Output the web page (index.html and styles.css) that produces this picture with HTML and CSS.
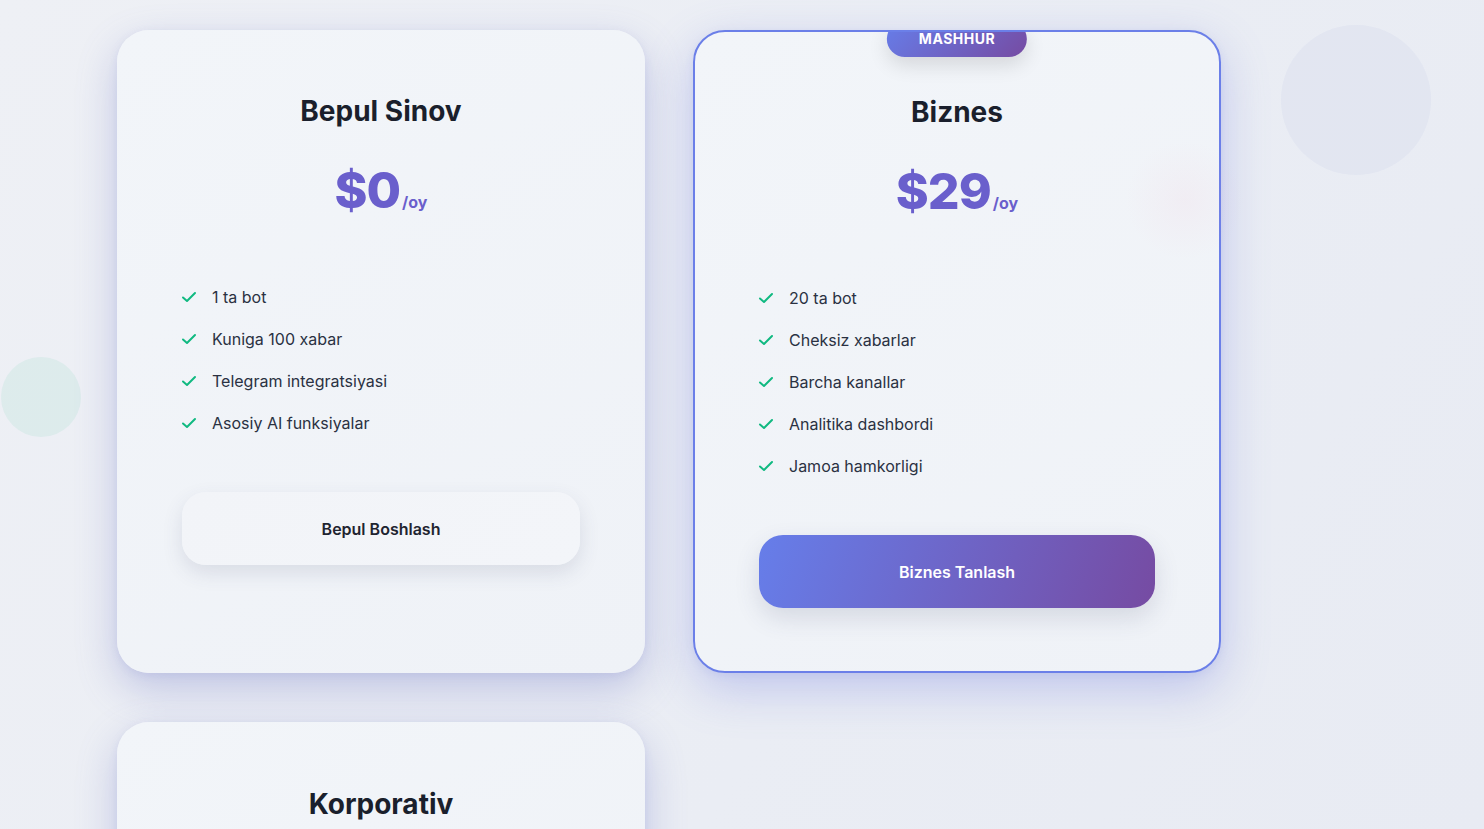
FILE: index.html
```html
<!DOCTYPE html>
<html lang="uz">
<head>
<meta charset="utf-8">
<title>Narxlar</title>
<link rel="stylesheet" href="styles.css">
</head>
<body>
<div class="blob blob-teal"></div>
<div class="blob blob-blue"></div>
<div class="blob blob-pink"></div>
<main class="pricing">
  <section class="card">
    <h3 class="plan">Bepul Sinov</h3>
    <div class="price"><span class="amount">$0</span><span class="per">/oy</span></div>
    <ul class="features">
      <li><svg class="check" viewBox="0 0 16 16"><polyline points="2,8.5 6,12 14,4"/></svg>1 ta bot</li>
      <li><svg class="check" viewBox="0 0 16 16"><polyline points="2,8.5 6,12 14,4"/></svg>Kuniga 100 xabar</li>
      <li><svg class="check" viewBox="0 0 16 16"><polyline points="2,8.5 6,12 14,4"/></svg>Telegram integratsiyasi</li>
      <li><svg class="check" viewBox="0 0 16 16"><polyline points="2,8.5 6,12 14,4"/></svg>Asosiy AI funksiyalar</li>
    </ul>
    <button class="btn btn-light">Bepul Boshlash</button>
  </section>
  <section class="card featured">
    <span class="badge">MASHHUR</span>
    <h3 class="plan">Biznes</h3>
    <div class="price"><span class="amount">$29</span><span class="per">/oy</span></div>
    <ul class="features">
      <li><svg class="check" viewBox="0 0 16 16"><polyline points="2,8.5 6,12 14,4"/></svg>20 ta bot</li>
      <li><svg class="check" viewBox="0 0 16 16"><polyline points="2,8.5 6,12 14,4"/></svg>Cheksiz xabarlar</li>
      <li><svg class="check" viewBox="0 0 16 16"><polyline points="2,8.5 6,12 14,4"/></svg>Barcha kanallar</li>
      <li><svg class="check" viewBox="0 0 16 16"><polyline points="2,8.5 6,12 14,4"/></svg>Analitika dashbordi</li>
      <li><svg class="check" viewBox="0 0 16 16"><polyline points="2,8.5 6,12 14,4"/></svg>Jamoa hamkorligi</li>
    </ul>
    <button class="btn btn-primary">Biznes Tanlash</button>
  </section>
  <section class="card card-partial">
    <h3 class="plan">Korporativ</h3>
  </section>
</main>
</body>
</html>
```
FILE: styles.css
```css
* { box-sizing: border-box; }
html, body { margin: 0; padding: 0; }
body {
  font-family: "Inter", "Liberation Sans", sans-serif;
  background: linear-gradient(120deg, #eef0f5 0%, #eaedf4 60%, #e8ebf3 100%);
  height: 100vh;
  overflow: hidden;
  position: relative;
}
.pricing {
  display: grid;
  grid-template-columns: 528px 528px;
  column-gap: 48px;
  row-gap: 49px;
  padding: 30px 0 0 117px;
  position: relative;
  z-index: 1;
}
.card {
  position: relative;
  overflow: hidden;
  border-radius: 32px;
  padding: 64px;
  background: linear-gradient(150deg, #f2f5f9 0%, #eff2f7 100%);
  box-shadow: 0 16px 40px rgba(100, 108, 192, 0.32), 0 2px 8px rgba(100, 108, 192, 0.1);
  text-align: center;
}
.card-partial { min-height: 400px; padding-top: 65px; }
.card.featured {
  border: 2px solid #6b7fe8;
  padding: 63px 63px 63px;
  box-shadow: 0 16px 48px rgba(102, 116, 220, 0.32), 0 2px 8px rgba(102, 116, 220, 0.1);
}
.badge {
  position: absolute;
  top: -11px;
  left: 50%;
  transform: translateX(-50%);
  padding: 8px 32px;
  line-height: 20px;
  font-size: 14px;
  font-weight: 700;
  letter-spacing: 0.5px;
  color: #fff;
  border-radius: 20px;
  background: linear-gradient(135deg, #667eea 0%, #764ba2 100%);
  box-shadow: 0 8px 20px rgba(0, 0, 0, 0.12);
}
.plan {
  margin: 0;
  font-size: 28px;
  line-height: 34px;
  font-weight: 700;
  color: #1a1f2c;
}
.price {
  margin-top: 32px;
  line-height: 60px;
  color: #6a5fcc;
}
.amount {
  font-size: 50px;
  font-weight: 800;
  letter-spacing: -1px;
}
.per {
  font-size: 16px;
  font-weight: 700;
  margin-left: 2px;
}
.features {
  list-style: none;
  margin: 44px 0 48px;
  padding: 0;
  text-align: left;
}
.features li {
  display: flex;
  align-items: center;
  gap: 15px;
  padding: 8px 0;
  line-height: 26px;
  font-size: 16px;
  color: #2a3142;
}
.check {
  width: 16px;
  height: 16px;
  flex: none;
  fill: none;
  stroke: #10b981;
  stroke-width: 2;
  stroke-linecap: round;
  stroke-linejoin: round;
}
.btn {
  display: block;
  width: calc(100% - 2px);
  margin: 0 auto;
  height: 73px;
  border: none;
  border-radius: 24px;
  font-family: inherit;
  font-size: 16px;
  font-weight: 600;
  cursor: pointer;
}
.btn-light {
  background: linear-gradient(135deg, #f2f4f8, #f3f5f9);
  color: #1f2430;
  box-shadow: 0 8px 20px rgba(60, 70, 110, 0.13);
}
.btn-primary {
  background: linear-gradient(110deg, #667eea 0%, #764ba2 100%);
  color: #fff;
  box-shadow: 0 10px 24px rgba(60, 70, 110, 0.15);
}
.blob {
  position: absolute;
  border-radius: 50%;
  pointer-events: none;
}
.blob-teal {
  left: 1px; top: 357px;
  width: 80px; height: 80px;
  background: rgba(16, 185, 129, 0.07);
}
.blob-blue {
  left: 1281px; top: 25px;
  width: 150px; height: 150px;
  background: rgba(102, 110, 200, 0.05);
}
.blob-pink {
  left: 1125px; top: 140px;
  width: 120px; height: 120px;
  background: radial-gradient(circle, rgba(240, 150, 180, 0.07) 0%, rgba(240, 150, 180, 0) 70%);
  z-index: 2;
}
```
